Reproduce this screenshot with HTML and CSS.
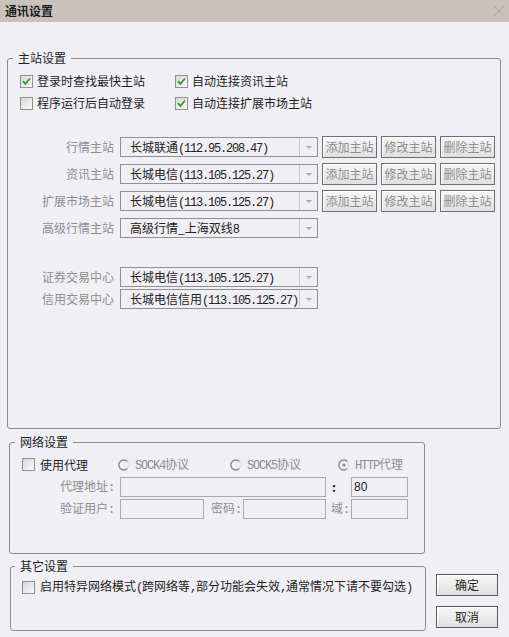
FILE: index.html
```html
<!DOCTYPE html>
<html lang="zh-CN">
<head>
    <meta charset="UTF-8">
    <title>通讯设置</title>
    <link rel="stylesheet" href="styles.css">
</head>
<body>
    <div class="titlebar">
        <span class="title">通讯设置</span>
        <svg class="close" width="12" height="12" viewBox="0 0 12 12"><path d="M1 1L11 11M11 1L1 11" stroke="#aaa49d" stroke-width="1" fill="none"/></svg>
    </div>

    <div class="dialog-body">
        <!-- 主站设置 -->
        <fieldset class="group group-main">
            <legend>主站设置</legend>
            <div class="check-grid">
                <label class="check"><span class="box"><svg width="9" height="9" viewBox="0 0 9 9"><path d="M1 4.2L3.4 6.8L8 1.5" fill="none" stroke="#3f8f35" stroke-width="1.8"/></svg></span><span>登录时查找最快主站</span></label>
                <label class="check"><span class="box"><svg width="9" height="9" viewBox="0 0 9 9"><path d="M1 4.2L3.4 6.8L8 1.5" fill="none" stroke="#3f8f35" stroke-width="1.8"/></svg></span><span>自动连接资讯主站</span></label>
                <label class="check"><span class="box"></span><span>程序运行后自动登录</span></label>
                <label class="check"><span class="box"><svg width="9" height="9" viewBox="0 0 9 9"><path d="M1 4.2L3.4 6.8L8 1.5" fill="none" stroke="#3f8f35" stroke-width="1.8"/></svg></span><span>自动连接扩展市场主站</span></label>
            </div>

            <div class="station-list">
                <div class="field-row">
                    <span class="field-label">行情主站</span>
                    <div class="combo"><span class="combo-text">长城联通<span class="en">(112.95.208.47)</span></span><span class="combo-arrow"></span></div>
                    <div class="row-buttons">
                        <button class="btn" disabled>添加主站</button>
                        <button class="btn" disabled>修改主站</button>
                        <button class="btn" disabled>删除主站</button>
                    </div>
                </div>
                <div class="field-row">
                    <span class="field-label">资讯主站</span>
                    <div class="combo"><span class="combo-text">长城电信<span class="en">(113.105.125.27)</span></span><span class="combo-arrow"></span></div>
                    <div class="row-buttons">
                        <button class="btn" disabled>添加主站</button>
                        <button class="btn" disabled>修改主站</button>
                        <button class="btn" disabled>删除主站</button>
                    </div>
                </div>
                <div class="field-row">
                    <span class="field-label">扩展市场主站</span>
                    <div class="combo"><span class="combo-text">长城电信<span class="en">(113.105.125.27)</span></span><span class="combo-arrow"></span></div>
                    <div class="row-buttons">
                        <button class="btn" disabled>添加主站</button>
                        <button class="btn" disabled>修改主站</button>
                        <button class="btn" disabled>删除主站</button>
                    </div>
                </div>
                <div class="field-row">
                    <span class="field-label">高级行情主站</span>
                    <div class="combo"><span class="combo-text">高级行情_上海双线<span class="en">8</span></span><span class="combo-arrow"></span></div>
                </div>
            </div>

            <div class="trade-list">
                <div class="field-row">
                    <span class="field-label">证券交易中心</span>
                    <div class="combo"><span class="combo-text">长城电信<span class="en">(113.105.125.27)</span></span><span class="combo-arrow"></span></div>
                </div>
                <div class="field-row">
                    <span class="field-label">信用交易中心</span>
                    <div class="combo"><span class="combo-text">长城电信信用<span class="en">(113.105.125.27)</span></span><span class="combo-arrow"></span></div>
                </div>
            </div>
        </fieldset>

        <!-- 网络设置 -->
        <fieldset class="group group-net">
            <legend>网络设置</legend>
            <div class="proxy-row">
                <label class="check check-wide"><span class="box"></span><span>使用代理</span></label>
                <span class="radio"><svg width="12" height="12" viewBox="0 0 12 12"><circle cx="6" cy="6" r="5" fill="none" stroke="#dedede"/><path d="M9.3 2.4A5 5 0 1 0 9.3 9.6" fill="none" stroke="#8a8a8a" stroke-width="1.4"/></svg><span><span class="en">SOCK4</span>协议</span></span>
                <span class="radio"><svg width="12" height="12" viewBox="0 0 12 12"><circle cx="6" cy="6" r="5" fill="none" stroke="#dedede"/><path d="M9.3 2.4A5 5 0 1 0 9.3 9.6" fill="none" stroke="#8a8a8a" stroke-width="1.4"/></svg><span><span class="en">SOCK5</span>协议</span></span>
                <span class="radio"><svg width="12" height="12" viewBox="0 0 12 12"><circle cx="6" cy="6" r="5" fill="none" stroke="#dedede"/><path d="M9.3 2.4A5 5 0 1 0 9.3 9.6" fill="none" stroke="#8a8a8a" stroke-width="1.4"/><circle cx="6" cy="6" r="1.6" fill="#8a8a8a"/></svg><span><span class="en">HTTP</span>代理</span></span>
            </div>
            <div class="input-row">
                <span class="field-label">代理地址<span class="en">:</span></span>
                <span class="input w-addr"></span>
                <span class="sep sep-colon">:</span>
                <span class="input w-port">80</span>
            </div>
            <div class="input-row">
                <span class="field-label">验证用户<span class="en">:</span></span>
                <span class="input w-user"></span>
                <span class="sep sep-pass">密码<span class="en">:</span></span>
                <span class="input w-pass"></span>
                <span class="sep sep-domain">域<span class="en">:</span></span>
                <span class="input w-port"></span>
            </div>
        </fieldset>

        <div class="bottom-row">
            <!-- 其它设置 -->
            <fieldset class="group group-other">
                <legend>其它设置</legend>
                <label class="check check-wide"><span class="box"></span><span>启用特异网络模式<span class="en">(</span>跨网络等<span class="en">,</span>部分功能会失效<span class="en">,</span>通常情况下请不要勾选<span class="en">)</span></span></label>
            </fieldset>
            <div class="dialog-actions">
                <button class="btn btn-main">确定</button>
                <button class="btn btn-main">取消</button>
            </div>
        </div>
    </div>
</body>
</html>
```

FILE: styles.css
```css
:root {
    --bg: #f0eff3;
    --disabled-text: #8e8e8e;
    --group-border: #8d8d8d;
}

* {
    margin: 0;
    padding: 0;
    box-sizing: border-box;
}

body {
    width: 509px;
    height: 637px;
    overflow: hidden;
    background: var(--bg);
    font-family: "Noto Sans CJK SC", sans-serif;
    font-size: 12px;
    line-height: 16px;
    color: #1e1e1e;
}

/* 半角字符：宽 6px */
.en {
    font-family: "Liberation Mono", monospace;
    font-size: 12px;
    letter-spacing: -1.2px;
}

/* 标题栏 */
.titlebar {
    height: 22px;
    background: #c9c2ba;
    display: flex;
    align-items: center;
    justify-content: space-between;
    padding: 0 4px 0 5px;
}

.title {
    font-weight: bold;
    color: #1a1a1a;
}

.dialog-body {
    padding: 0 8px 0 7px;
}

/* 分组框 */
.group {
    border: 1px solid var(--group-border);
    border-radius: 3px;
    min-width: 0;
}

.group legend {
    margin-left: -7px;
    padding: 0 5px;
    line-height: 16px;
}

.group-main {
    margin-top: 28px;
    height: 379px;
    padding: 4px 0 0 12px;
}

.group-net {
    margin: 5px 0 0 2px;
    width: 416px;
    height: 120px;
    padding: 3px 0 0 12px;
}

.group-other {
    margin-left: 3px;
    width: 416px;
    height: 73px;
    padding: 2px 0 0 11px;
}

/* 复选框 */
.check-grid {
    display: grid;
    grid-template-columns: 155px auto;
    grid-auto-rows: 22px;
}

.check {
    display: flex;
    align-items: center;
    gap: 4px;
    white-space: nowrap;
}

.check-wide {
    gap: 5px;
}

.group-other .check {
    height: 22px;
}

.box {
    width: 13px;
    height: 13px;
    flex: none;
    border: 1px solid #909191;
    background: linear-gradient(135deg, #d6d6d6, #fbfbfb);
    display: flex;
    align-items: center;
    justify-content: center;
}

/* 主站行 */
.station-list {
    margin-top: 22px;
    display: flex;
    flex-direction: column;
    gap: 5px;
}

.trade-list {
    margin-top: 27px;
    display: flex;
    flex-direction: column;
}

.field-row {
    display: flex;
    align-items: center;
    height: 22px;
}

.field-label {
    width: 94px;
    margin-right: 6px;
    text-align: right;
    color: var(--disabled-text);
    white-space: nowrap;
    flex: none;
}

.combo {
    width: 198px;
    height: 20px;
    border: 1px solid #909090;
    display: flex;
    flex: none;
}

.combo-text {
    flex: 1;
    padding-left: 9px;
    line-height: 18px;
    white-space: nowrap;
    color: #222;
}

.combo-arrow {
    width: 18px;
    border-left: 1px solid #c9c9c9;
    display: flex;
    align-items: center;
    justify-content: center;
}

.combo-arrow::after {
    content: "";
    border-left: 3px solid transparent;
    border-right: 3px solid transparent;
    border-top: 3px solid #a9a9a9;
}

.row-buttons {
    display: flex;
    gap: 4px;
    margin-left: 4px;
}

.btn {
    width: 55px;
    height: 22px;
    border: 1px solid #6f6f6f;
    background: linear-gradient(#f7f7f7, #e0e0e0);
    box-shadow: inset 1px 1px #fff;
    font: inherit;
    color: var(--disabled-text);
}

/* 网络设置 */
.proxy-row {
    display: grid;
    grid-template-columns: 96px 112px 108px auto;
    align-items: center;
    height: 23px;
}

.radio {
    display: flex;
    align-items: center;
    gap: 5px;
    color: var(--disabled-text);
    white-space: nowrap;
}

.input-row {
    display: flex;
    align-items: center;
    height: 22px;
}

.input-row .field-label {
    width: 92px;
}

.input {
    height: 20px;
    border: 1px solid #a9a9a9;
    background: var(--bg);
    font-family: "Liberation Sans", sans-serif;
    line-height: 18px;
    padding-left: 2px;
    color: #222;
}

.w-addr { width: 206px; }
.w-user { width: 84px; }
.w-pass { width: 83px; }
.w-port { width: 57px; }

.sep {
    color: var(--disabled-text);
    white-space: nowrap;
}

.sep-colon {
    width: 25px;
    padding-left: 6px;
    font-weight: bold;
    color: #111;
}

.sep-pass {
    width: 39px;
    padding-left: 7px;
}

.sep-domain {
    width: 25px;
    padding-left: 5px;
}

/* 底部 */
.bottom-row {
    display: flex;
    margin-top: 4px;
}

.dialog-actions {
    display: flex;
    flex-direction: column;
    gap: 10px;
    padding-top: 16px;
    margin-left: 10px;
}

.btn-main {
    width: 62px;
    border-color: #5a5a5a;
    color: #1e1e1e;
}
```
